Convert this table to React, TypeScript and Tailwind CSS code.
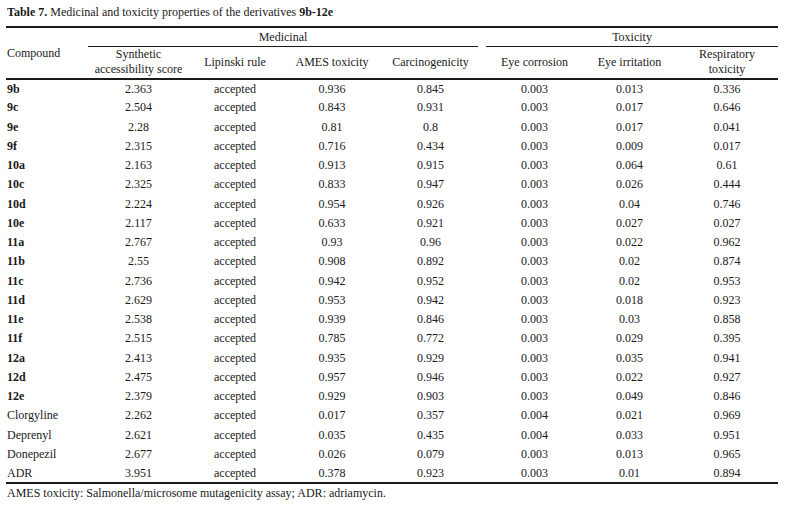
const rows: [string, boolean, string, string, string, string, string, string, string][] = [
  ["9b", true, "2.363", "accepted", "0.936", "0.845", "0.003", "0.013", "0.336"],
  ["9c", true, "2.504", "accepted", "0.843", "0.931", "0.003", "0.017", "0.646"],
  ["9e", true, "2.28", "accepted", "0.81", "0.8", "0.003", "0.017", "0.041"],
  ["9f", true, "2.315", "accepted", "0.716", "0.434", "0.003", "0.009", "0.017"],
  ["10a", true, "2.163", "accepted", "0.913", "0.915", "0.003", "0.064", "0.61"],
  ["10c", true, "2.325", "accepted", "0.833", "0.947", "0.003", "0.026", "0.444"],
  ["10d", true, "2.224", "accepted", "0.954", "0.926", "0.003", "0.04", "0.746"],
  ["10e", true, "2.117", "accepted", "0.633", "0.921", "0.003", "0.027", "0.027"],
  ["11a", true, "2.767", "accepted", "0.93", "0.96", "0.003", "0.022", "0.962"],
  ["11b", true, "2.55", "accepted", "0.908", "0.892", "0.003", "0.02", "0.874"],
  ["11c", true, "2.736", "accepted", "0.942", "0.952", "0.003", "0.02", "0.953"],
  ["11d", true, "2.629", "accepted", "0.953", "0.942", "0.003", "0.018", "0.923"],
  ["11e", true, "2.538", "accepted", "0.939", "0.846", "0.003", "0.03", "0.858"],
  ["11f", true, "2.515", "accepted", "0.785", "0.772", "0.003", "0.029", "0.395"],
  ["12a", true, "2.413", "accepted", "0.935", "0.929", "0.003", "0.035", "0.941"],
  ["12d", true, "2.475", "accepted", "0.957", "0.946", "0.003", "0.022", "0.927"],
  ["12e", true, "2.379", "accepted", "0.929", "0.903", "0.003", "0.049", "0.846"],
  ["Clorgyline", false, "2.262", "accepted", "0.017", "0.357", "0.004", "0.021", "0.969"],
  ["Deprenyl", false, "2.621", "accepted", "0.035", "0.435", "0.004", "0.033", "0.951"],
  ["Donepezil", false, "2.677", "accepted", "0.026", "0.079", "0.003", "0.013", "0.965"],
  ["ADR", false, "3.951", "accepted", "0.378", "0.923", "0.003", "0.01", "0.894"],
];

const App = () => {
  return (
    <div className="w-[787px] h-[506px] bg-white pl-[6px] pt-[5px] font-['Liberation_Serif',_'Times_New_Roman',_serif] text-[12px] text-[#1a1a1a]">
      <p className="h-[15px] leading-[15px] pl-[1px]">
        <b>Table 7.</b> Medicinal and toxicity properties of the derivatives <b>9b-12e</b>
      </p>
      <table className="mt-[6px] w-[772px] table-fixed border-collapse border-t-2 border-b-2 border-[#1a1a1a]">
        <colgroup>
          <col className="w-[82px]" />
          <col className="w-[101px]" />
          <col className="w-[92px]" />
          <col className="w-[102px]" />
          <col className="w-[95px]" />
          <col className="w-[8px]" />
          <col className="w-[97px]" />
          <col className="w-[93px]" />
          <col className="w-[102px]" />
        </colgroup>
        <thead>
          <tr className="h-[19px]">
            <th rowSpan={2} className="text-left font-normal align-middle pl-[1px]">
              Compound
            </th>
            <th colSpan={4} className="font-normal border-b border-[#1a1a1a]">
              Medicinal
            </th>
            <th />
            <th colSpan={3} className="font-normal border-b border-[#1a1a1a]">
              Toxicity
            </th>
          </tr>
          <tr className="h-[32px] border-b-2 border-[#1a1a1a] leading-[15px]">
            <th className="font-normal">
              Synthetic
              <br />
              accessibility score
            </th>
            <th className="font-normal">Lipinski rule</th>
            <th className="font-normal">AMES toxicity</th>
            <th className="font-normal">Carcinogenicity</th>
            <th />
            <th className="font-normal">Eye corrosion</th>
            <th className="font-normal">Eye irritation</th>
            <th className="font-normal">
              Respiratory
              <br />
              toxicity
            </th>
          </tr>
        </thead>
        <tbody>
          {rows.map(([name, bold, sa, lip, ames, carc, corr, irr, resp]) => (
            <tr key={name} className="h-[19.25px] text-center">
              <td className={`text-left pl-[1px] ${bold ? "font-bold" : ""}`}>{name}</td>
              <td>{sa}</td>
              <td>{lip}</td>
              <td>{ames}</td>
              <td>{carc}</td>
              <td />
              <td>{corr}</td>
              <td>{irr}</td>
              <td>{resp}</td>
            </tr>
          ))}
        </tbody>
      </table>
      <p className="mt-[2px] h-[15px] leading-[15px] pl-[1px]">
        AMES toxicity: Salmonella/microsome mutagenicity assay; ADR: adriamycin.
      </p>
    </div>
  );
};

export default App;
